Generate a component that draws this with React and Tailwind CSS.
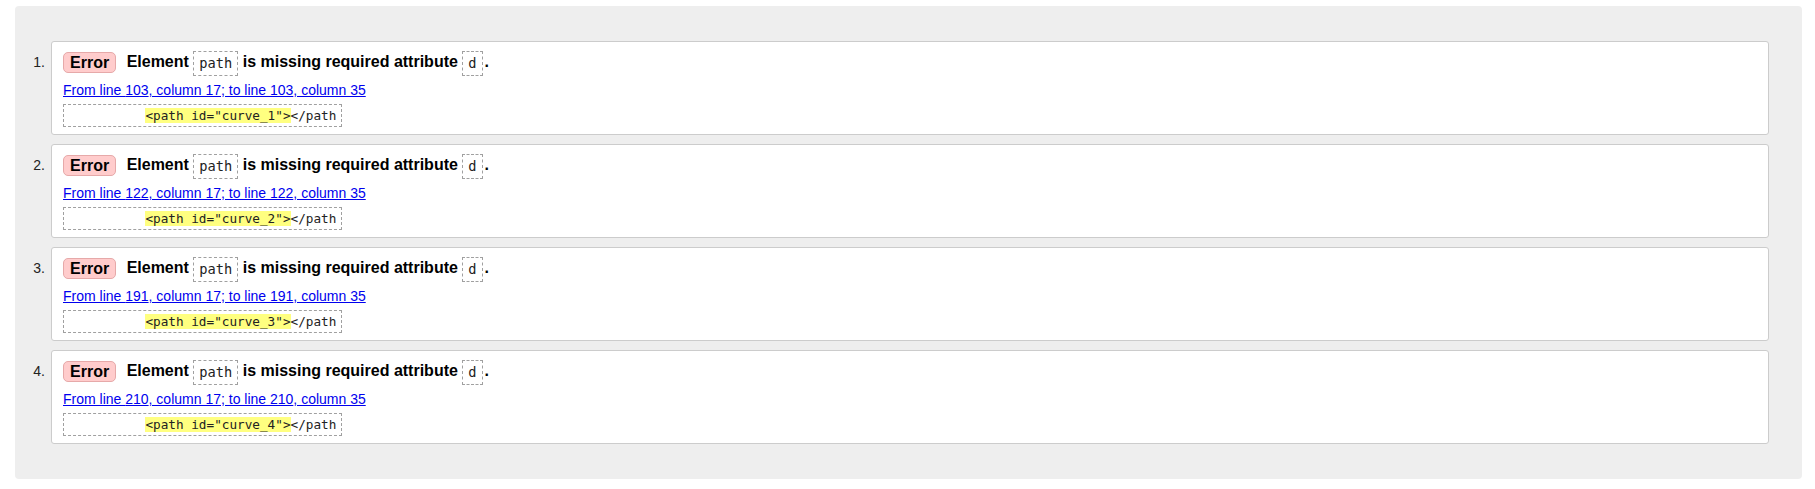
const errors = [
  { line: 103, id: 'curve_1' },
  { line: 122, id: 'curve_2' },
  { line: 191, id: 'curve_3' },
  { line: 210, id: 'curve_4' },
]

function Code({ children }) {
  return (
    <code className="inline-block align-middle h-[25px] px-[5px] border border-dashed border-[#a0a0a0] leading-[23px] text-[13.7px] font-normal text-[#222] font-['DejaVu_Sans_Mono',monospace]">
      {children}
    </code>
  )
}

function Message({ n, line, id }) {
  return (
    <li className="flex">
      <span className="w-[26px] shrink-0 pr-[6px] mt-[9px] text-right text-[14px] leading-[25px] text-[#222]">
        {n}.
      </span>
      <div className="flex-1 bg-white border border-[#cccccc] rounded-[3px] pl-[11px] pt-[8px] pb-[7px]">
        <div className="flex items-center h-[25px]">
          <strong className="h-[21px] px-[6px] bg-[#ffcccc] border border-[#e6a9a9] rounded-[5px] text-[16px] leading-[19px] font-bold text-black">
            Error
          </strong>
          <p className="ml-[10.5px] text-[16px] font-bold text-black leading-[25px] whitespace-nowrap">
            Element <Code>path</Code> is missing required attribute <Code>d</Code>
            <span className="ml-[2px]">.</span>
          </p>
        </div>
        <a href="#" className="block mt-[7px] w-fit text-[14px] leading-[16px] text-[#0000ee] underline">
          From line {line}, column 17; to line {line}, column 35
        </a>
        <code className="block mt-[6px] w-fit px-[5px] py-[3px] border border-dashed border-[#a0a0a0] whitespace-pre text-[12.7px] leading-[15px] text-[#222] font-['DejaVu_Sans_Mono',monospace]">
          {'          '}
          <b className="font-normal bg-[#ffff80]">{`<path id="${id}">`}</b>
          {'</path'}
        </code>
      </div>
    </li>
  )
}

export default function App() {
  return (
    <div className="pt-[6px] pl-[15px] pr-[13px] font-['Liberation_Sans',Arial,sans-serif]">
      <ol className="bg-[#eeeeee] rounded-[4px] pl-[10px] pr-[33px] pt-[35px] pb-[35px] flex flex-col gap-[9px]">
        {errors.map((e, i) => (
          <Message key={e.id} n={i + 1} line={e.line} id={e.id} />
        ))}
      </ol>
    </div>
  )
}
